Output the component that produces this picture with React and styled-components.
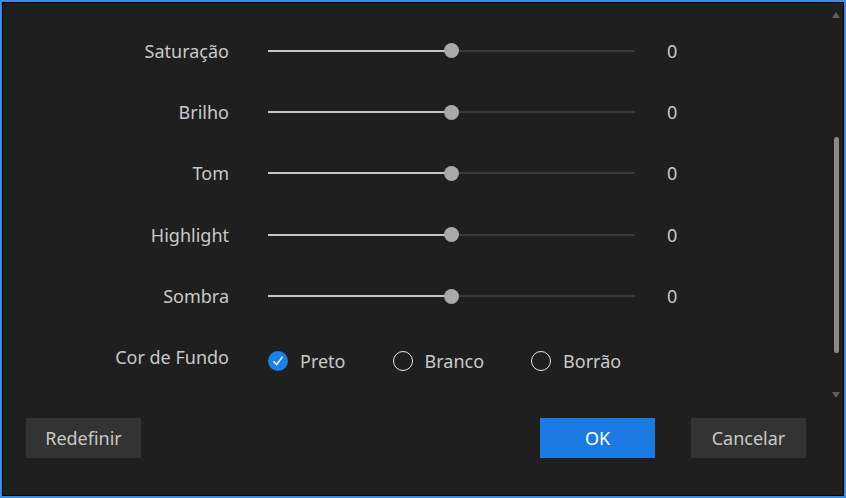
import React, { useState } from 'react';
import styled, { createGlobalStyle } from 'styled-components';

const GlobalStyle = createGlobalStyle`
  html, body {
    margin: 0;
    padding: 0;
    background: #1f1f1f;
  }
  * {
    box-sizing: border-box;
  }
`;

const Frame = styled.div`
  width: 846px;
  height: 498px;
  border: 2px solid #3b8ee0;
  box-shadow: inset 0 0 0 1px #000;
  background: #1f1f1f;
  display: flex;
  flex-direction: column;
  font-family: 'Noto Sans', 'Open Sans', sans-serif;
  color: #c9c9c9;
`;

const Main = styled.div`
  display: flex;
  height: 396px;
`;

const Content = styled.div`
  flex: 1;
  display: grid;
  grid-template-columns: 227px 367px 1fr;
  grid-auto-rows: 61.4px;
  column-gap: 39px;
  padding-top: 18px;
  align-content: start;
`;

const Label = styled.div`
  justify-self: end;
  align-self: center;
  font-size: 18px;
  margin-top: ${(p) => (p.$shift ? '-2px' : '0')};
`;

const Track = styled.div`
  align-self: center;
  position: relative;
  height: 2px;
  background: #3a3a3a;
`;

const Fill = styled.div`
  height: 100%;
  background: #c6c6c6;
`;

const Thumb = styled.div`
  position: absolute;
  top: 50%;
  width: 15px;
  height: 15px;
  margin-left: -7.5px;
  margin-top: -7.5px;
  border-radius: 50%;
  background: #a9a9a9;
`;

const Value = styled.div`
  align-self: center;
  font-size: 18px;
  margin-left: -7px;
`;

const Options = styled.div`
  grid-column: 2 / 4;
  align-self: center;
  display: flex;
  align-items: center;
  gap: 47px;
  margin-top: 6px;
`;

const Option = styled.label`
  display: flex;
  align-items: center;
  gap: 12px;
  font-size: 18px;
  cursor: pointer;
`;

const Radio = styled.span`
  width: 20px;
  height: 20px;
  border-radius: 50%;
  display: flex;
  align-items: center;
  justify-content: center;
  border: ${(p) => (p.$on ? 'none' : '1.5px solid #e6e6e6')};
  background: ${(p) => (p.$on ? '#1a80ea' : 'transparent')};
`;

const ScrollBar = styled.div`
  width: 16px;
  display: flex;
  flex-direction: column;
  align-items: center;
  padding: 10px 0 0;
`;

const Arrow = styled.div`
  width: 0;
  height: 0;
  border-left: 4px solid transparent;
  border-right: 4px solid transparent;
  ${(p) =>
    p.$down
      ? 'border-top: 6px solid #5e5e5e;'
      : 'border-bottom: 6px solid #5e5e5e;'}
`;

const ThumbBar = styled.div`
  width: 5px;
  height: 216px;
  border-radius: 3px;
  background: #8a8a8a;
  margin: 119px 0 39px;
`;

const Footer = styled.div`
  display: flex;
  align-items: center;
  padding: 20px 38px 0 24px;
`;

const Button = styled.button`
  width: 115px;
  height: 40px;
  border: none;
  font-family: inherit;
  font-size: 18px;
  color: ${(p) => (p.$primary ? '#fff' : '#c9c9c9')};
  background: ${(p) => (p.$primary ? '#1a7ae2' : '#333333')};
  margin-left: ${(p) => p.$gap || '0'};
  cursor: pointer;
`;

const sliders = ['Saturação', 'Brilho', 'Tom', 'Highlight', 'Sombra'];
const backgrounds = ['Preto', 'Branco', 'Borrão'];

function Check() {
  return (
    <svg width="14" height="14" viewBox="0 0 14 14">
      <path d="M2.5 7.2 L5.6 10.6 L11.6 2.6" fill="none" stroke="#fff" strokeWidth="1.5" />
    </svg>
  );
}

export default function App() {
  let [bg, setBg] = useState('Preto');

  return (
    <>
      <GlobalStyle />
      <Frame>
        <Main>
          <Content>
            {sliders.map((name) => (
              <React.Fragment key={name}>
                <Label>{name}</Label>
                <Track>
                  <Fill style={{ width: '50%' }} />
                  <Thumb style={{ left: '50%' }} />
                </Track>
                <Value>0</Value>
              </React.Fragment>
            ))}
            <Label $shift>Cor de Fundo</Label>
            <Options>
              {backgrounds.map((b) => (
                <Option key={b} onClick={() => setBg(b)}>
                  <Radio $on={bg === b}>{bg === b ? <Check /> : null}</Radio>
                  {b}
                </Option>
              ))}
            </Options>
          </Content>
          <ScrollBar>
            <Arrow />
            <ThumbBar />
            <Arrow $down />
          </ScrollBar>
        </Main>
        <Footer>
          <Button>Redefinir</Button>
          <Button $primary $gap="399px">OK</Button>
          <Button $gap="36px">Cancelar</Button>
        </Footer>
      </Frame>
    </>
  );
}
